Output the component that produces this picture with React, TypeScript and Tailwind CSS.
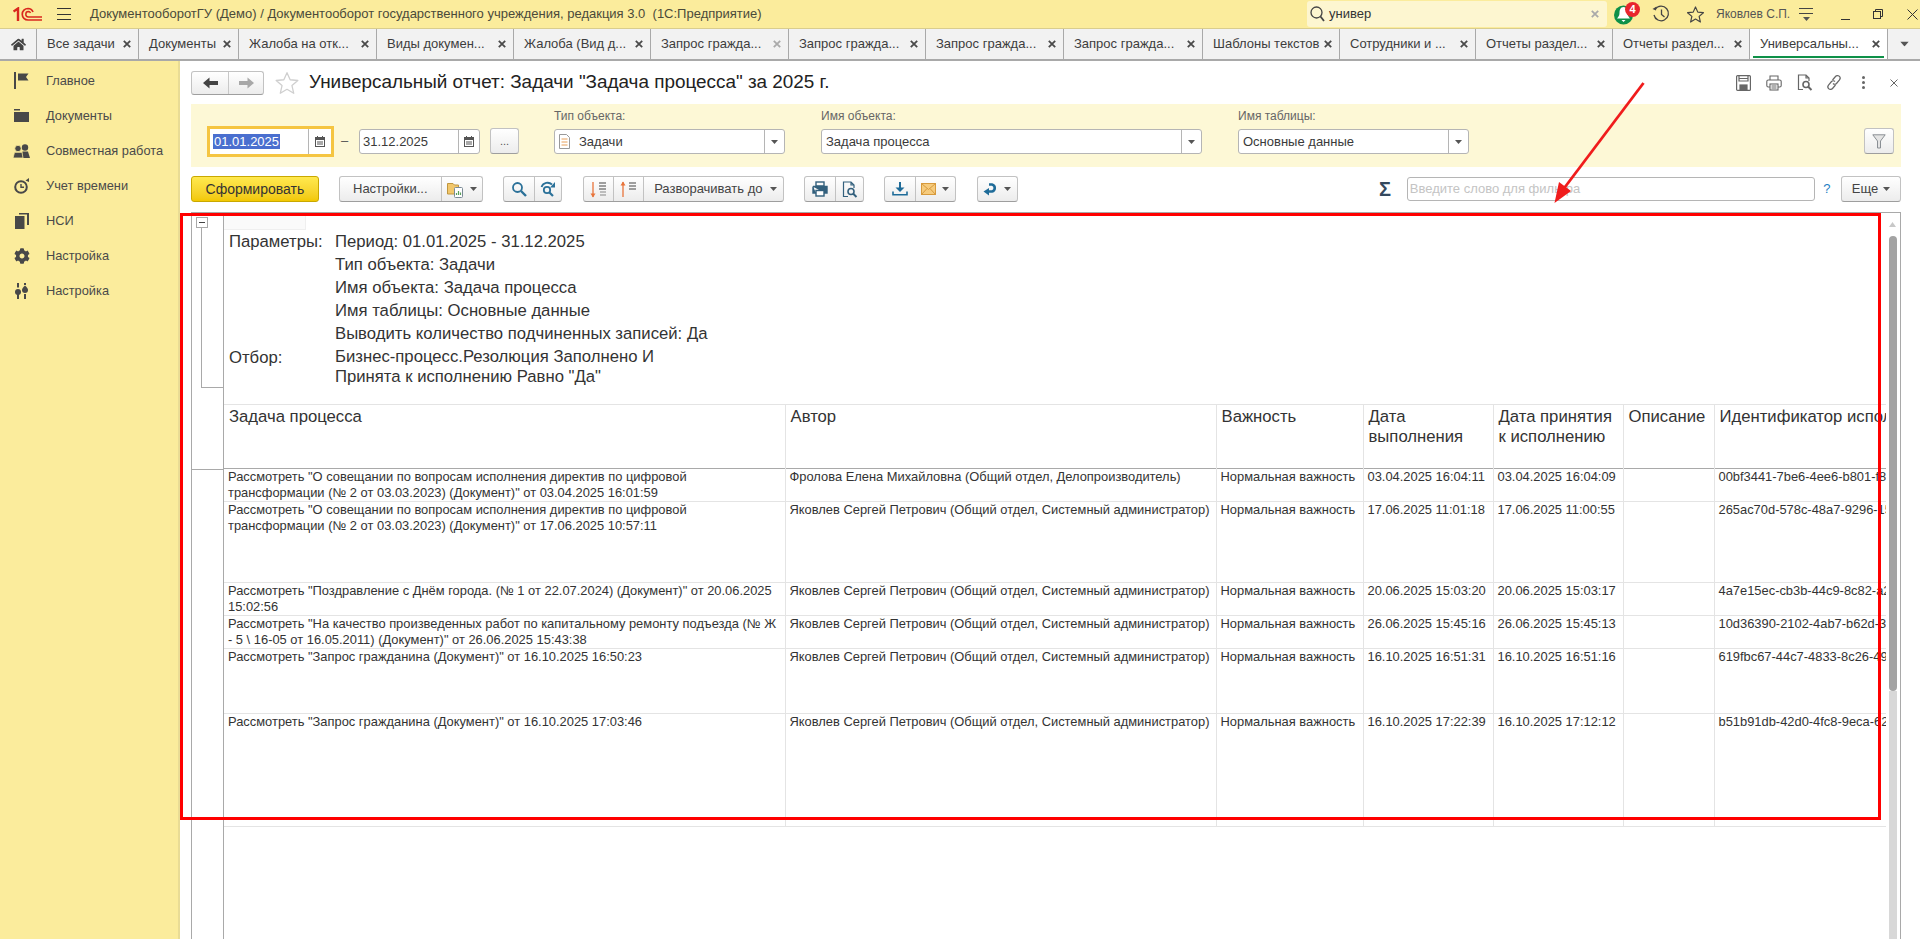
import type { ReactNode } from "react";
import { FaCog, FaHome } from "react-icons/fa";

const tabs = [
  { title: "Все задачи", w: "w-[102px]" },
  { title: "Документы", w: "w-[100px]" },
  { title: "Жалоба на отк...", w: "w-[138px]" },
  { title: "Виды докумен...", w: "w-[137px]" },
  { title: "Жалоба (Вид д...", w: "w-[137px]" },
  { title: "Запрос гражда...", w: "w-[138px]", dim: true },
  { title: "Запрос гражда...", w: "w-[137px]" },
  { title: "Запрос гражда...", w: "w-[138px]" },
  { title: "Запрос гражда...", w: "w-[139px]" },
  { title: "Шаблоны текстов", w: "w-[137px]" },
  { title: "Сотрудники и ...", w: "w-[136px]" },
  { title: "Отчеты раздел...", w: "w-[137px]" },
  { title: "Отчеты раздел...", w: "w-[137px]" },
];

const rows = [
  {
    h: "h-[33px]",
    task: 'Рассмотреть "О совещании по вопросам исполнения директив по цифровой трансформации (№ 2 от 03.03.2023) (Документ)" от 03.04.2025 16:01:59',
    author: "Фролова Елена Михайловна (Общий отдел, Делопроизводитель)",
    done: "03.04.2025 16:04:11",
    taken: "03.04.2025 16:04:09",
    id: "00bf3441-7be6-4ee6-b801-f86c2a41d7e3",
  },
  {
    h: "h-[81px]",
    task: 'Рассмотреть "О совещании по вопросам исполнения директив по цифровой трансформации (№ 2 от 03.03.2023) (Документ)" от 17.06.2025 10:57:11',
    author: "Яковлев Сергей Петрович (Общий отдел, Системный администратор)",
    done: "17.06.2025 11:01:18",
    taken: "17.06.2025 11:00:55",
    id: "265ac70d-578c-48a7-9296-15d04be7a1c2",
  },
  {
    h: "h-[33px]",
    task: 'Рассмотреть "Поздравление с Днём города. (№ 1 от 22.07.2024) (Документ)" от 20.06.2025 15:02:56',
    author: "Яковлев Сергей Петрович (Общий отдел, Системный администратор)",
    done: "20.06.2025 15:03:20",
    taken: "20.06.2025 15:03:17",
    id: "4a7e15ec-cb3b-44c9-8c82-a2f17d03be56",
  },
  {
    h: "h-[33px]",
    task: 'Рассмотреть "На качество произведенных работ по капитальному ремонту подъезда (№ Ж - 5 \\ 16-05 от 16.05.2011) (Документ)" от 26.06.2025 15:43:38',
    author: "Яковлев Сергей Петрович (Общий отдел, Системный администратор)",
    done: "26.06.2025 15:45:16",
    taken: "26.06.2025 15:45:13",
    id: "10d36390-2102-4ab7-b62d-31c8e9f07a14",
  },
  {
    h: "h-[65px]",
    task: 'Рассмотреть "Запрос гражданина (Документ)" от 16.10.2025 16:50:23',
    author: "Яковлев Сергей Петрович (Общий отдел, Системный администратор)",
    done: "16.10.2025 16:51:31",
    taken: "16.10.2025 16:51:16",
    id: "619fbc67-44c7-4833-8c26-494be01d72fa",
  },
  {
    h: "h-[113px]",
    task: 'Рассмотреть "Запрос гражданина (Документ)" от 16.10.2025 17:03:46',
    author: "Яковлев Сергей Петрович (Общий отдел, Системный администратор)",
    done: "16.10.2025 17:22:39",
    taken: "16.10.2025 17:12:12",
    id: "b51b91db-42d0-4fc8-9eca-620d7a3ef158",
  },
];

// ── Icons ────────────────────────────────────────────────────────────────────

function Logo1C() {
  return (
    <svg width="30" height="15" viewBox="0 0 30 15" fill="none" stroke="#d9281e">
      <path d="M0.5 4.5 L5 1.5 V14" strokeWidth="2.4" />
      <path d="M29 13 H15 A5.5 5.5 0 0 1 15 1.5 A5.5 5.5 0 0 1 20 5" strokeWidth="1.7" />
      <path d="M29 10 H15.5 A2.6 2.6 0 0 1 15.5 4.6 A2.6 2.6 0 0 1 17.5 6" strokeWidth="1.5" />
    </svg>
  );
}

function BellBadge() {
  return (
    <div className="relative ml-[7px] h-[22px] w-[20px]">
      <svg width="20" height="22" viewBox="0 0 20 22">
        <circle cx="9.5" cy="12" r="9.5" fill="#0e9148" />
        <path d="M9.5 4 C6.5 4 5.5 7 5.5 10 C5.5 13 4 14 3 15.5 H16 C15 14 13.5 13 13.5 10 C13.5 7 12.5 4 9.5 4 Z M7.5 17 H11.5 L9.5 19 Z" fill="#fff" />
      </svg>
      <span className="absolute left-[11px] top-[-1px] flex h-[15px] w-[15px] items-center justify-center rounded-full bg-[#e8262c] text-[11px] font-bold leading-none text-white">
        4
      </span>
    </div>
  );
}

function HistoryIcon() {
  return (
    <svg width="20" height="20" viewBox="0 0 20 20" fill="none" stroke="#444" strokeWidth="1.3">
      <path d="M4.2 5.2 A7.3 7.3 0 1 1 3 11" />
      <path d="M1.5 5 L5 6.5 L5.5 2.5" fill="#444" stroke="none" />
      <path d="M10.5 5.5 V10.5 L13.5 13" />
    </svg>
  );
}

function StarIcon({ size, color, width }: { size: number; color: string; width: number }) {
  return (
    <svg width={size} height={size} viewBox="0 0 24 24" fill="none" stroke={color} strokeWidth={width} strokeLinejoin="round">
      <path d="M12 2.5 L14.9 9 L22 9.7 L16.6 14.4 L18.2 21.5 L12 17.8 L5.8 21.5 L7.4 14.4 L2 9.7 L9.1 9 Z" />
    </svg>
  );
}

function MiniCalendar() {
  return (
    <svg width="10" height="11" viewBox="0 0 10 11" fill="none">
      <rect x="0.5" y="1.5" width="9" height="9" fill="#fff" stroke="#555" />
      <rect x="0.5" y="1.5" width="9" height="2.5" fill="#555" />
      <path d="M2.5 0 V2 M7.5 0 V2 M2 6 H8 M2 8 H8" stroke="#555" />
    </svg>
  );
}

function Caret({ className = "" }: { className?: string }) {
  return (
    <svg width="7" height="4" viewBox="0 0 7 4" className={className}>
      <path d="M0 0 H7 L3.5 4 Z" fill="#555" />
    </svg>
  );
}

function X({ color = "#4a4a4a" }: { color?: string }) {
  return (
    <svg width="8" height="8" viewBox="0 0 8 8" stroke={color} strokeWidth="1.8">
      <path d="M0.8 0.8 L7.2 7.2 M7.2 0.8 L0.8 7.2" />
    </svg>
  );
}

function NavArrow({ color, back }: { color: string; back?: boolean }) {
  return (
    <svg width="15" height="12" viewBox="0 0 15 12" fill={color} className={back ? "" : "rotate-180"}>
      <path d="M0 6 L6.5 0.5 V4 H15 V8 H6.5 V11.5 Z" />
    </svg>
  );
}

function SearchIcon({ redo }: { redo?: boolean }) {
  return (
    <svg width="16" height="16" viewBox="0 0 16 16" fill="none" stroke="#2b7199" strokeWidth="1.8">
      {redo ? (
        <>
          <circle cx="7" cy="9" r="3.2" />
          <path d="M9.5 11.5 L13 15" strokeWidth="2.2" />
          <path d="M1.5 6 A6.5 6.5 0 0 1 12 3.5" />
          <path d="M15 1 V6.5 H10 Z" fill="#2b7199" stroke="none" />
        </>
      ) : (
        <>
          <circle cx="6.5" cy="6.5" r="4.5" />
          <path d="M10 10 L15 15" strokeWidth="2.4" />
        </>
      )}
    </svg>
  );
}

function SortIcon({ up }: { up?: boolean }) {
  return (
    <svg width="17" height="17" viewBox="0 0 17 17" fill="none">
      <path d={up ? "M3 16 V1" : "M3 1 V16"} stroke="#e8743b" strokeWidth="1.3" />
      <path d={up ? "M0.5 4.5 L3 0.5 L5.5 4.5 Z" : "M0.5 12.5 L3 16.5 L5.5 12.5 Z"} fill="#e8743b" />
      <path d="M9 2 H16 M9 5 H16 M9 8 H16" stroke="#444" strokeWidth="1.2" />
      {!up && <path d="M10 11 H16 M10 14 H16" stroke="#888" strokeWidth="1.2" />}
    </svg>
  );
}

function PrintIcon() {
  return (
    <svg width="16" height="16" viewBox="0 0 16 16" fill="none" stroke="#33607d" strokeWidth="1.4">
      <rect x="4" y="1" width="8" height="4" />
      <path d="M1 5.5 H15 V12 H12 M4 12 H1 V5.5" fill="#33607d" />
      <rect x="4" y="9.5" width="8" height="5.5" fill="#fff" />
    </svg>
  );
}

function PrintOutlineIcon() {
  return (
    <svg width="16" height="16" viewBox="0 0 16 16" fill="none" stroke="#666" strokeWidth="1.1">
      <path d="M4 5 V1 H12 V5" />
      <rect x="0.8" y="5" width="14.4" height="7" rx="1.5" />
      <rect x="4" y="9" width="8" height="6" fill="#fff" />
      <path d="M5.5 11 H10.5 M5.5 13 H10.5" />
    </svg>
  );
}

function PreviewIcon({ color = "#33607d" }: { color?: string }) {
  return (
    <svg width="16" height="17" viewBox="0 0 16 17" fill="none" stroke={color} strokeWidth="1.2">
      <path d="M6 15.5 H1.5 V1 H9 L12 4 V7 M9 1 V4 H12" />
      <circle cx="9" cy="10.5" r="3" strokeWidth="1.6" />
      <path d="M11 12.5 L14.5 16" strokeWidth="2" />
    </svg>
  );
}

function SaveIcon() {
  return (
    <svg width="15" height="16" viewBox="0 0 15 16" fill="none" stroke="#666" strokeWidth="1.2">
      <rect x="0.6" y="0.6" width="13.8" height="14.8" rx="1" />
      <path d="M3 1 V6 H12 V1 M3 3.5 H12" />
      <rect x="4" y="10" width="7" height="5.5" fill="#666" />
    </svg>
  );
}

function LinkIcon() {
  return (
    <svg width="16" height="17" viewBox="0 0 16 17" fill="none" stroke="#666" strokeWidth="1.2">
      <path d="M6.5 6 L9.5 2.5 A2.4 2.4 0 0 1 13.5 5.8 L10.5 9.5 A2.4 2.4 0 0 1 7 9.5" />
      <path d="M9.5 11 L6.5 14.5 A2.4 2.4 0 0 1 2.5 11.2 L5.5 7.5 A2.4 2.4 0 0 1 9 7.5" />
    </svg>
  );
}

function ComboDocIcon() {
  return (
    <svg width="11" height="15" viewBox="0 0 11 15" fill="#fff" stroke="#999">
      <path d="M0.5 0.5 H7.5 L10.5 3.5 V14.5 H0.5 Z" />
      <path d="M2.5 5 H8.5 M2.5 8 H8.5 M2.5 11 H8.5" stroke="#e8a05a" />
    </svg>
  );
}

function SettingsFolderIcon() {
  return (
    <svg width="17" height="17" viewBox="0 0 17 17">
      <path d="M0.5 2.5 H6 L7.5 4 H11.5 V13 H0.5 Z" fill="#f2c76b" stroke="#bf9640" />
      <rect x="7.5" y="6.5" width="8" height="10" rx="1" fill="#fff" stroke="#7a8a96" />
      <path d="M9.5 14 V12 M11.5 14 V10 M13.5 14 V11.5" stroke="#5aa05a" strokeWidth="1.2" />
    </svg>
  );
}

function DownloadIcon() {
  return (
    <svg width="16" height="14" viewBox="0 0 16 14" fill="none" stroke="#1f6c99">
      <path d="M8 0 V7" strokeWidth="2" />
      <path d="M3.5 5.5 H12.5 L8 10 Z" fill="#1f6c99" stroke="none" />
      <path d="M1 9.5 V12.8 H15 V9.5" strokeWidth="1.6" />
    </svg>
  );
}

function MailIcon() {
  return (
    <svg width="15" height="12" viewBox="0 0 15 12">
      <rect x="0.5" y="0.5" width="14" height="11" fill="#f6cb7d" stroke="#d79a3c" />
      <path d="M0.5 0.5 L7.5 6.5 L14.5 0.5 M0.5 11.5 L6 5.5 M14.5 11.5 L9 5.5" fill="none" stroke="#d79a3c" />
    </svg>
  );
}

function ReturnIcon() {
  return (
    <svg width="14" height="14" viewBox="0 0 14 14" fill="none">
      <path d="M6 2.5 H9 A3.6 3.6 0 0 1 9 9.5 H5" stroke="#1f6c99" strokeWidth="2.6" />
      <path d="M6 6 L0.5 9.5 L6 13.5 Z" fill="#1f6c99" />
    </svg>
  );
}

function FunnelIcon() {
  return (
    <svg width="14" height="15" viewBox="0 0 14 15" fill="#e4e4e4" stroke="#8a8f94">
      <path d="M0.8 0.8 H13.2 L8.5 7 V14 H5.5 V7 Z" />
    </svg>
  );
}

function FlagIcon() {
  return (
    <svg width="15" height="17" viewBox="0 0 15 17" fill="#484848">
      <rect x="0" y="0" width="2" height="17" />
      <path d="M4 1.5 H14.5 L12 5 L14.5 8.5 H4 Z" />
    </svg>
  );
}

function FolderIcon() {
  return (
    <svg width="15" height="13" viewBox="0 0 15 13" fill="#484848">
      <path d="M0 0 H6 V1.5 H0 Z M0 3 H15 V13 H0 Z" />
    </svg>
  );
}

function PeopleIcon() {
  return (
    <svg width="17" height="14" viewBox="0 0 17 14" fill="#484848">
      <circle cx="12" cy="3.5" r="3.2" />
      <path d="M8.5 14 L9.5 7.5 H15 L17 14 Z" />
      <circle cx="5" cy="4.5" r="3.2" fill="#484848" stroke="#fbec9c" strokeWidth="0.8" />
      <path d="M0 14 L1.5 8.3 H9 L10 14 Z" stroke="#fbec9c" strokeWidth="0.8" />
    </svg>
  );
}

function TimerIcon() {
  return (
    <svg width="16" height="16" viewBox="0 0 16 16" fill="none" stroke="#484848" strokeWidth="2">
      <circle cx="7" cy="9" r="5.8" />
      <path d="M7 6 V9.3 H10" strokeWidth="1.4" />
      <path d="M11.5 2.5 L15 0 V4 Z" fill="#484848" stroke="none" />
    </svg>
  );
}

function PagesIcon() {
  return (
    <svg width="14" height="16" viewBox="0 0 14 16" fill="#484848">
      <path d="M0 3 L9.5 3 V16 H0 Z" />
      <path d="M4 0 H14 V12 H12 V1.5 H4 Z" />
    </svg>
  );
}

function SlidersIcon() {
  return (
    <svg width="13" height="16" viewBox="0 0 13 16" fill="#484848">
      <rect x="2" y="0" width="2" height="4.5" />
      <circle cx="3" cy="9" r="3" />
      <rect x="2" y="11" width="2" height="5" />
      <rect x="9" y="0" width="2" height="2" />
      <path d="M10 2.5 C12 4.5 13 5.5 13 7 A3 3 0 0 1 7 7 C7 5.5 8 4.5 10 2.5 Z" />
      <rect x="9" y="11" width="2" height="5" />
    </svg>
  );
}

// ── Small building blocks ────────────────────────────────────────────────────

function SideItem({ icon, label }: { icon: ReactNode; label: string }) {
  return (
    <div className="flex h-[35px] items-center">
      <div className="flex w-[46px] justify-center pl-[4px] pr-[7px]">{icon}</div>
      <span className="text-[12.8px] text-[#4a4a4a]">{label}</span>
    </div>
  );
}

function ToolGroup({ children, className }: { children: ReactNode; className: string }) {
  return (
    <div className={`flex h-[26px] rounded-[3px] border border-[#c2c2c2] border-b-[#9e9e9e] bg-gradient-to-b from-white to-[#ececec] ${className}`}>
      {children}
    </div>
  );
}

function ToolCell({ children, className }: { children: ReactNode; className: string }) {
  return <div className={`flex items-center justify-center border-r border-[#c2c2c2] last:border-r-0 ${className}`}>{children}</div>;
}

function Combo({ value, w, icon }: { value: string; w: string; icon?: ReactNode }) {
  return (
    <div className={`flex h-[25px] items-center rounded-[3px] border border-[#b5b5b5] bg-white ${w}`}>
      {icon && <div className="ml-[4px] mr-[9px] flex">{icon}</div>}
      <span className={`flex-1 text-[13px] text-[#3a3a3a] ${icon ? "" : "pl-[4px]"}`}>{value}</span>
      <div className="flex h-full w-[20px] items-center justify-center border-l border-[#b5b5b5]">
        <Caret />
      </div>
    </div>
  );
}

function Label({ text }: { text: string }) {
  return <div className="mb-[5px] h-[20px] pt-[5px] text-[12px] leading-[15px] text-[#666]">{text}</div>;
}

// ── Main page ────────────────────────────────────────────────────────────────

export default function App() {
  return (
    <div className="relative flex h-[939px] w-[1920px] flex-col overflow-hidden bg-white font-['Liberation_Sans',Arial,sans-serif]">
      {/* title bar */}
      <header className="flex h-[29px] shrink-0 items-center border-b border-[#d9cd8e] bg-[#fbec9c]">
        <div className="ml-[13px] flex">
          <Logo1C />
        </div>
        <div className="ml-[14px] flex h-[12px] w-[14px] flex-col justify-between">
          <div className="h-[1px] bg-[#333]" />
          <div className="h-[1px] bg-[#333]" />
          <div className="h-[1px] bg-[#333]" />
        </div>
        <span className="ml-[19px] w-[1217px] whitespace-pre text-[13px] text-[#4a4a3a]">
          ДокументооборотГУ (Демо) / Документооборот государственного учреждения, редакция 3.0  (1С:Предприятие)
        </span>
        <div className="flex h-[26px] w-[300px] items-center rounded-[3px] bg-[#fdf6d0] pl-[3px] pr-[8px]">
          <svg width="15" height="16" viewBox="0 0 15 16" fill="none" stroke="#444" strokeWidth="1.3">
            <circle cx="6.5" cy="6.5" r="5.5" />
            <path d="M10.5 10.5 L14 15" strokeWidth="1.8" />
          </svg>
          <span className="ml-[4px] flex-1 text-[13px] text-[#333]">универ</span>
          <X color="#aaa" />
        </div>
        <BellBadge />
        <div className="ml-[17px] flex">
          <HistoryIcon />
        </div>
        <div className="ml-[15px] flex">
          <StarIcon size={19} color="#444" width={1.5} />
        </div>
        <span className="ml-[11px] w-[83px] text-[12px] text-[#555]">Яковлев С.П.</span>
        <div className="flex w-[14px] flex-col items-center">
          <div className="h-[1px] w-[14px] bg-[#444]" />
          <div className="mt-[4px] h-[1px] w-[14px] bg-[#444]" />
          <Caret className="mt-[3px]" />
        </div>
        <div className="ml-[28px] mt-[11px] h-[1px] w-[9px] bg-[#333]" />
        <svg width="10" height="10" viewBox="0 0 10 10" fill="none" stroke="#333" className="ml-[23px]">
          <rect x="0.5" y="2.5" width="7" height="7" />
          <path d="M2.5 2.5 V0.5 H9.5 V7.5 H7.5" />
        </svg>
        <svg width="11" height="11" viewBox="0 0 11 11" stroke="#333" className="ml-[24px]">
          <path d="M0.5 0.5 L10.5 10.5 M10.5 0.5 L0.5 10.5" />
        </svg>
      </header>

      {/* tabs */}
      <nav className="flex h-[32px] shrink-0 border-b-2 border-[#a9a9a9] bg-[#f2f2f2]">
        <div className="flex w-[37px] items-center justify-center border-r border-[#a9a9a9] text-[#444]">
          <FaHome size={15} />
        </div>
        {tabs.map((t, i) => (
          <div key={i} className={`flex items-center justify-between border-r border-[#a9a9a9] pl-[10px] pr-[7px] ${t.w}`}>
            <span className="whitespace-nowrap text-[13px] text-[#3d3d3d]">{t.title}</span>
            <X color={t.dim ? "#aaa" : "#4a4a4a"} />
          </div>
        ))}
        <div className="relative flex w-[138px] items-center justify-between border-r border-[#a9a9a9] bg-white pl-[10px] pr-[7px]">
          <span className="whitespace-nowrap text-[13px] text-[#3d3d3d]">Универсальны...</span>
          <X />
          <div className="absolute bottom-[1px] left-[3px] h-[2px] w-[131px] bg-[#0e9148]" />
        </div>
        <div className="flex flex-1 items-center justify-center">
          <Caret className="scale-125" />
        </div>
      </nav>

      <div className="flex min-h-0 flex-1">
        {/* sidebar */}
        <aside className="w-[180px] shrink-0 border-r-2 border-[#e9dc95] bg-[#fbec9c] pt-[2px]">
          <SideItem icon={<FlagIcon />} label="Главное" />
          <SideItem icon={<FolderIcon />} label="Документы" />
          <SideItem icon={<PeopleIcon />} label="Совместная работа" />
          <SideItem icon={<TimerIcon />} label="Учет времени" />
          <SideItem icon={<PagesIcon />} label="НСИ" />
          <SideItem icon={<FaCog size={16} color="#484848" />} label="Настройка" />
          <SideItem icon={<SlidersIcon />} label="Настройка" />
        </aside>

        {/* form */}
        <main className="flex min-w-0 flex-1 flex-col pl-[11px] pr-[19px] pt-[10px]">
          <div className="flex h-[23px] shrink-0 items-center">
            <div className="flex h-[24px] w-[73px] rounded-[3px] border border-[#c2c2c2] border-b-[#9e9e9e] bg-gradient-to-b from-white to-[#ececec]">
              <div className="flex w-[37px] items-center justify-center border-r border-[#c8c8c8]">
                <NavArrow color="#444" back />
              </div>
              <div className="flex flex-1 items-center justify-center">
                <NavArrow color="#a8a8a8" />
              </div>
            </div>
            <div className="ml-[10px] flex">
              <StarIcon size={26} color="#cfcfcf" width={1.2} />
            </div>
            <h1 className="ml-[9px] w-[1427px] whitespace-nowrap text-[18.9px] leading-none text-[#222]">
              Универсальный отчет: Задачи "Задача процесса" за 2025 г.
            </h1>
            <div className="flex items-center">
              <SaveIcon />
            </div>
            <div className="ml-[15px] flex">
              <PrintOutlineIcon />
            </div>
            <div className="ml-[15px] flex">
              <PreviewIcon color="#666" />
            </div>
            <div className="ml-[13px] flex">
              <LinkIcon />
            </div>
            <div className="ml-[20px] flex flex-col gap-[2px]">
              <div className="h-[3px] w-[3px] rounded-full bg-[#666]" />
              <div className="h-[3px] w-[3px] rounded-full bg-[#666]" />
              <div className="h-[3px] w-[3px] rounded-full bg-[#666]" />
            </div>
            <div className="ml-[25px] flex">
              <svg width="8" height="8" viewBox="0 0 8 8" stroke="#666">
                <path d="M0.5 0.5 L7.5 7.5 M7.5 0.5 L0.5 7.5" />
              </svg>
            </div>
          </div>

          {/* filter panel */}
          <section className="mt-[10px] flex h-[63px] shrink-0 bg-[#fdf8d6] pl-[16px]">
            <div className="mt-[22px] flex h-[31px] w-[127px] items-center border-[3px] border-[#f5c542] bg-white pl-[3px]">
              <span className="bg-[#4a6fcf] px-[1px] text-[13px] leading-[15px] text-white">01.01.2025</span>
              <div className="ml-auto flex h-[25px] w-[23px] items-center justify-center border-l border-[#b5b5b5]">
                <MiniCalendar />
              </div>
            </div>
            <span className="ml-[7px] mt-[27px] w-[18px] text-[13px] text-[#555]">–</span>
            <div className="mt-[25px] flex h-[25px] w-[121px] items-center rounded-[3px] border border-[#b5b5b5] bg-white pl-[3px]">
              <span className="text-[13px] text-[#3a3a3a]">31.12.2025</span>
              <div className="ml-auto flex h-full w-[21px] items-center justify-center border-l border-[#b5b5b5]">
                <MiniCalendar />
              </div>
            </div>
            <div className="ml-[10px] mt-[24px] flex h-[26px] w-[29px] items-center justify-center rounded-[3px] border border-[#c2c2c2] border-b-[#9e9e9e] bg-gradient-to-b from-white to-[#ececec] text-[11px] text-[#555]">
              ...
            </div>
            <div className="ml-[35px]">
              <Label text="Тип объекта:" />
              <Combo value="Задачи" w="w-[231px]" icon={<ComboDocIcon />} />
            </div>
            <div className="ml-[36px]">
              <Label text="Имя объекта:" />
              <Combo value="Задача процесса" w="w-[381px]" />
            </div>
            <div className="ml-[36px]">
              <Label text="Имя таблицы:" />
              <Combo value="Основные данные" w="w-[231px]" />
            </div>
            <div className="ml-[395px] mt-[24px] flex h-[26px] w-[30px] items-center justify-center rounded-[3px] border border-[#c2c2c2] border-b-[#9e9e9e] bg-gradient-to-b from-white to-[#ececec]">
              <FunnelIcon />
            </div>
          </section>

          {/* toolbar */}
          <section className="mt-[9px] flex h-[26px] shrink-0 items-center">
            <div className="flex h-[26px] w-[128px] items-center justify-center rounded-[3px] border border-[#c9a800] bg-gradient-to-b from-[#ffe94d] to-[#f2c800] text-[14px] text-[#333]">
              Сформировать
            </div>
            <ToolGroup className="ml-[20px] w-[144px]">
              <ToolCell className="w-[102px] text-[13px] text-[#444]">Настройки...</ToolCell>
              <ToolCell className="flex-1 gap-[6px]">
                <SettingsFolderIcon />
                <Caret />
              </ToolCell>
            </ToolGroup>
            <ToolGroup className="ml-[20px] w-[60px]">
              <ToolCell className="w-[31px]">
                <SearchIcon />
              </ToolCell>
              <ToolCell className="flex-1">
                <SearchIcon redo />
              </ToolCell>
            </ToolGroup>
            <ToolGroup className="ml-[21px] w-[201px]">
              <ToolCell className="w-[30px]">
                <SortIcon />
              </ToolCell>
              <ToolCell className="w-[30px]">
                <SortIcon up />
              </ToolCell>
              <ToolCell className="flex-1 gap-[8px] pl-[4px] text-[13px] text-[#444]">
                Разворачивать до
                <Caret />
              </ToolCell>
            </ToolGroup>
            <ToolGroup className="ml-[20px] w-[60px]">
              <ToolCell className="w-[31px]">
                <PrintIcon />
              </ToolCell>
              <ToolCell className="flex-1">
                <PreviewIcon />
              </ToolCell>
            </ToolGroup>
            <ToolGroup className="ml-[20px] w-[72px]">
              <ToolCell className="w-[31px]">
                <DownloadIcon />
              </ToolCell>
              <ToolCell className="flex-1 gap-[6px]">
                <MailIcon />
                <Caret />
              </ToolCell>
            </ToolGroup>
            <ToolGroup className="ml-[21px] w-[41px]">
              <ToolCell className="flex-1 gap-[7px]">
                <ReturnIcon />
                <Caret />
              </ToolCell>
            </ToolGroup>
            <span className="ml-[361px] w-[22px] text-[20px] font-bold leading-none text-[#34495e]">Σ</span>
            <div className="ml-[6px] flex h-[24px] w-[409px] items-center rounded-[3px] border border-[#b5b5b5] bg-white pl-[2px] text-[13px] text-[#c4c4c4]">
              Введите слово для фильтра
            </div>
            <span className="ml-[8px] w-[18px] text-[13px] text-[#1f7fc4]">?</span>
            <ToolGroup className="w-[60px]">
              <ToolCell className="flex-1 gap-[5px] text-[13px] text-[#444]">
                Еще
                <Caret />
              </ToolCell>
            </ToolGroup>
          </section>

          {/* report */}
          <section className="mt-[10px] flex min-h-0 flex-1 border-x border-t border-[#a9a9a9]">
            <div className="w-[32px] shrink-0 border-r border-[#a9a9a9]">
              <div className="ml-[4px] mt-[4px] flex h-[11px] w-[12px] items-center justify-center border border-[#a9a9a9] bg-white">
                <div className="h-[1px] w-[6px] bg-[#444]" />
              </div>
              <div className="ml-[9px] h-[160px] border-b border-l border-[#a9a9a9]" />
              <div className="mt-[81px] border-t border-[#a9a9a9]" />
            </div>

            <div className="w-[1662px] shrink-0 overflow-hidden">
              <div className="h-[191px]">
                <div className="h-[17px] w-[82px] border-b border-r border-[#efefef] bg-[#fafafa]" />
                <div className="ml-[5px] grid grid-cols-[106px_1fr] text-[16.7px] leading-[23px] text-[#333]">
                  <span>Параметры:</span>
                  <span>Период: 01.01.2025 - 31.12.2025</span>
                  <span />
                  <span>Тип объекта: Задачи</span>
                  <span />
                  <span>Имя объекта: Задача процесса</span>
                  <span />
                  <span>Имя таблицы: Основные данные</span>
                  <span />
                  <span>Выводить количество подчиненных записей: Да</span>
                  <span className="mt-[1px]">Отбор:</span>
                  <span className="mt-[2px] leading-[20px]">
                    Бизнес-процесс.Резолюция Заполнено И
                    <br />
                    Принята к исполнению Равно "Да"
                  </span>
                </div>
              </div>

              <table className="w-[1662px] table-fixed border-collapse text-[12.9px] leading-[16px] text-[#333]">
                <colgroup>
                  <col className="w-[561px]" />
                  <col className="w-[431px]" />
                  <col className="w-[147px]" />
                  <col className="w-[130px]" />
                  <col className="w-[130px]" />
                  <col className="w-[91px]" />
                  <col className="w-[172px]" />
                </colgroup>
                <thead>
                  <tr className="h-[64px] border-y border-t-[#e4e4e4] border-b-[#a9a9a9] text-left align-top text-[16.7px] font-normal leading-[20px]">
                    <th className="border-r border-[#e4e4e4] px-[5px] pt-[2px] font-normal">Задача процесса</th>
                    <th className="border-r border-[#e4e4e4] px-[5px] pt-[2px] font-normal">Автор</th>
                    <th className="border-r border-[#e4e4e4] px-[5px] pt-[2px] font-normal">Важность</th>
                    <th className="border-r border-[#e4e4e4] px-[5px] pt-[2px] font-normal">
                      Дата
                      <br />
                      выполнения
                    </th>
                    <th className="border-r border-[#e4e4e4] px-[5px] pt-[2px] font-normal">
                      Дата принятия
                      <br />к исполнению
                    </th>
                    <th className="border-r border-[#e4e4e4] px-[5px] pt-[2px] font-normal">Описание</th>
                    <th className="overflow-hidden whitespace-nowrap px-[5px] pt-[2px] font-normal">Идентификатор исполнителя</th>
                  </tr>
                </thead>
                <tbody>
                  {rows.map((r) => (
                    <tr key={r.id} className={`${r.h} border-b border-[#e4e4e4] align-top`}>
                      <td className="border-r border-[#e4e4e4] px-[4px]">{r.task}</td>
                      <td className="border-r border-[#e4e4e4] px-[4px]">{r.author}</td>
                      <td className="border-r border-[#e4e4e4] px-[4px]">Нормальная важность</td>
                      <td className="border-r border-[#e4e4e4] px-[4px]">{r.done}</td>
                      <td className="border-r border-[#e4e4e4] px-[4px]">{r.taken}</td>
                      <td className="border-r border-[#e4e4e4] px-[4px]" />
                      <td className="overflow-hidden whitespace-nowrap px-[4px]">{r.id}</td>
                    </tr>
                  ))}
                </tbody>
              </table>
            </div>

            {/* scrollbar */}
            <div className="flex w-[14px] shrink-0 flex-col items-center pr-[1px] pt-[9px]">
              <svg width="7" height="5" viewBox="0 0 7 5">
                <path d="M3.5 0 L7 5 H0 Z" fill="#c8c8c8" />
              </svg>
              <div className="mt-[9px] h-[455px] w-[8px] rounded-b-[4px] rounded-t-[4px] bg-[#a3a3a3]" />
              <div className="w-[8px] flex-1 bg-[#d8d8d8]" />
            </div>
          </section>
        </main>
      </div>

      {/* red annotation drawn over the screenshot */}
      <div className="absolute left-[180px] top-[213px] h-[607px] w-[1701px] border-[3px] border-[#ff0000]" />
      <svg className="absolute left-[1540px] top-[75px]" width="115" height="135" viewBox="0 0 115 135" fill="none">
        <path d="M103.5 8 L22 116" stroke="#f01c1c" strokeWidth="2.8" />
        <path d="M14.5 128 L19 107 L31 116 Z" fill="#f01c1c" />
      </svg>
    </div>
  );
}
